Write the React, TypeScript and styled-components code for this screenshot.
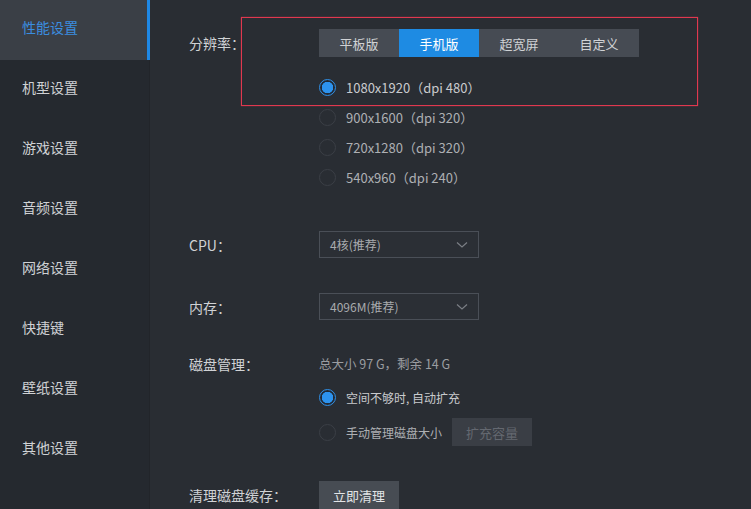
import React from "react";
import styled, { createGlobalStyle } from "styled-components";

const Global = createGlobalStyle`
  html, body { margin: 0; padding: 0; background: #292d33; }
  body { font-family: "Microsoft YaHei", "Noto Sans CJK SC", "Noto Sans", sans-serif; }
  * { box-sizing: border-box; }
`;

const Shell = styled.div`
  display: flex;
  width: 751px;
  height: 509px;
  overflow: hidden;
  background: #292d33;
`;

const Sidebar = styled.nav`
  width: 150px;
  flex: none;
  background: #25292f;
  border-right: 1px solid #22252a;
  display: flex;
  flex-direction: column;
`;

const NavItem = styled.div<{ $active?: boolean }>`
  height: 60px;
  display: flex;
  align-items: center;
  padding-left: 22px;
  padding-bottom: 6px;
  font-size: 14px;
  color: ${(p) => (p.$active ? "#3a8ee0" : "#cfd1d4")};
  background: ${(p) => (p.$active ? "#3a3f46" : "transparent")};
  border-right: 3px solid ${(p) => (p.$active ? "#1e88e5" : "transparent")};
  margin-right: -1px;
`;

const Content = styled.main`
  position: relative;
  flex: 1;
  padding: 29px 0 0 39px;
  display: flex;
  flex-direction: column;
`;

const Highlight = styled.div`
  position: absolute;
  left: 91px;
  top: 17px;
  width: 457px;
  height: 89px;
  border: 1px solid #e0384f;
  box-shadow: 0 0 1px rgba(224, 56, 79, 0.8);
  pointer-events: none;
`;

const Row = styled.div<{ $top?: number; $align?: string }>`
  display: grid;
  grid-template-columns: 130px 1fr;
  align-items: ${(p) => p.$align || "center"};
  margin-top: ${(p) => p.$top || 0}px;
`;

const Label = styled.div`
  font-size: 14px;
  color: #d0d2d5;
  line-height: 20px;
`;

const Segmented = styled.div`
  display: flex;
  height: 28px;
`;

const Seg = styled.div<{ $active?: boolean }>`
  width: 80px;
  display: flex;
  align-items: center;
  justify-content: center;
  font-size: 13px;
  color: ${(p) => (p.$active ? "#ffffff" : "#d0d2d5")};
  background: ${(p) => (p.$active ? "#1e8be3" : "#464b53")};
`;

const RadioList = styled.div<{ $top?: number; $gap?: number }>`
  display: flex;
  flex-direction: column;
  gap: ${(p) => p.$gap || 0}px;
  margin-top: ${(p) => p.$top || 0}px;
`;

const RadioItem = styled.div<{ $on?: boolean; $small?: boolean }>`
  height: 30px;
  display: flex;
  align-items: center;
  gap: 10px;
  font-size: ${(p) => (p.$small ? 12 : 13)}px;
  color: ${(p) => (p.$on ? "#c9cbce" : "#aeb0b3")};
`;

const Circle = styled.span<{ $on?: boolean }>`
  width: 17px;
  height: 17px;
  border-radius: 50%;
  flex: none;
  border: 1px solid ${(p) => (p.$on ? "#2f8fe6" : "#3b3f46")};
  background: ${(p) => (p.$on ? "radial-gradient(circle, #2d93ee 0 5.5px, #1f2a38 6px 6.6px, transparent 7px)" : "transparent")};
`;

const Select = styled.div`
  width: 160px;
  height: 27px;
  border: 1px solid #4a4f57;
  background: #2b2f35;
  display: flex;
  align-items: center;
  justify-content: space-between;
  padding: 0 10px;
  font-size: 12px;
  color: #a9abae;
`;

const Hint = styled.div`
  font-size: 12.5px;
  color: #9b9da1;
  line-height: 20px;
`;

const Button = styled.div<{ $disabled?: boolean }>`
  width: 80px;
  height: 28px;
  display: flex;
  align-items: center;
  justify-content: center;
  font-size: 13px;
  color: ${(p) => (p.$disabled ? "#646870" : "#e2e4e6")};
  background: ${(p) => (p.$disabled ? "#3a3e45" : "#474c53")};
`;

const Chevron = () => (
  <svg width="12" height="8" viewBox="0 0 12 8">
    <path d="M1 1.5 L6 6 L11 1.5" fill="none" stroke="#7b7f85" strokeWidth="1.2" />
  </svg>
);

const nav = ["性能设置", "机型设置", "游戏设置", "音频设置", "网络设置", "快捷键", "壁纸设置", "其他设置"];

export default function App() {
  return (
    <Shell>
      <Global />
      <Sidebar>
        {nav.map((n, i) => (
          <NavItem key={n} $active={i === 0}>
            {n}
          </NavItem>
        ))}
      </Sidebar>
      <Content>
        <Highlight />
        <Row>
          <Label>分辨率：</Label>
          <Segmented>
            <Seg>平板版</Seg>
            <Seg $active>手机版</Seg>
            <Seg>超宽屏</Seg>
            <Seg>自定义</Seg>
          </Segmented>
        </Row>
        <Row>
          <span />
          <RadioList $top={15}>
            <RadioItem $on>
              <Circle $on />1080x1920（dpi 480）
            </RadioItem>
            <RadioItem>
              <Circle />900x1600（dpi 320）
            </RadioItem>
            <RadioItem>
              <Circle />720x1280（dpi 320）
            </RadioItem>
            <RadioItem>
              <Circle />540x960（dpi 240）
            </RadioItem>
          </RadioList>
        </Row>
        <Row $top={39}>
          <Label>CPU：</Label>
          <Select>
            4核(推荐)
            <Chevron />
          </Select>
        </Row>
        <Row $top={35}>
          <Label>内存：</Label>
          <Select>
            4096M(推荐)
            <Chevron />
          </Select>
        </Row>
        <Row $top={34} $align="start">
          <Label>磁盘管理：</Label>
          <Hint>总大小 97 G，剩余 14 G</Hint>
        </Row>
        <Row $top={8}>
          <span />
          <RadioList $gap={5}>
            <RadioItem $on $small>
              <Circle $on />空间不够时, 自动扩充
            </RadioItem>
            <RadioItem $small>
              <Circle />手动管理磁盘大小
              <Button $disabled>扩充容量</Button>
            </RadioItem>
          </RadioList>
        </Row>
        <Row $top={34}>
          <Label>清理磁盘缓存：</Label>
          <Button>立即清理</Button>
        </Row>
      </Content>
    </Shell>
  );
}
